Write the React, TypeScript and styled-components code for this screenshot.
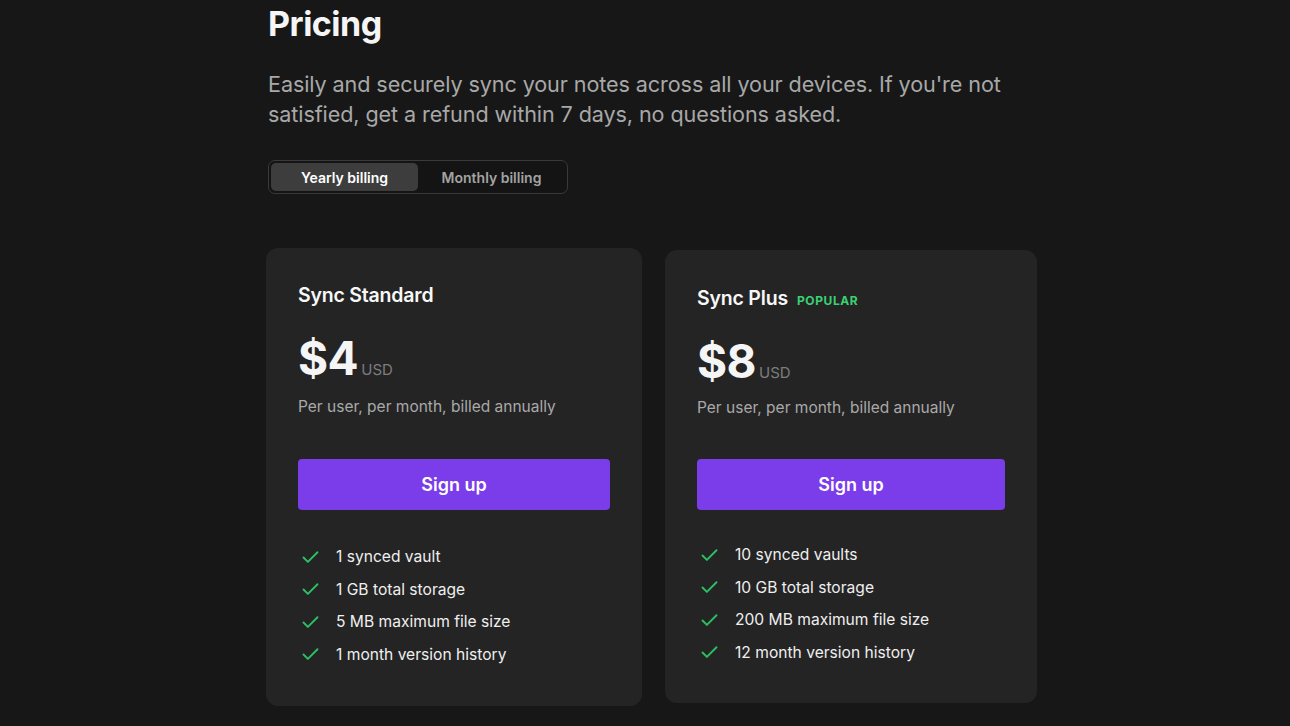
import { useState } from 'react'
import styled, { createGlobalStyle } from 'styled-components'
import { Check } from 'lucide-react'

type Plan = {
  name: string
  badge?: string
  price: string
  features: string[]
}

const plans: Plan[] = [
  {
    name: 'Sync Standard',
    price: '$4',
    features: ['1 synced vault', '1 GB total storage', '5 MB maximum file size', '1 month version history'],
  },
  {
    name: 'Sync Plus',
    badge: 'Popular',
    price: '$8',
    features: ['10 synced vaults', '10 GB total storage', '200 MB maximum file size', '12 month version history'],
  },
]

export default function App() {
  const [billing, setBilling] = useState<'yearly' | 'monthly'>('yearly')

  return (
    <>
      <GlobalStyle />
      <Page>
        <Title>Pricing</Title>
        <Lead>
          Easily and securely sync your notes across all your devices. If you're not satisfied, get a refund
          within 7 days, no questions asked.
        </Lead>
        <Toggle>
          <ToggleButton $active={billing === 'yearly'} onClick={() => setBilling('yearly')}>
            Yearly billing
          </ToggleButton>
          <ToggleButton $active={billing === 'monthly'} onClick={() => setBilling('monthly')}>
            Monthly billing
          </ToggleButton>
        </Toggle>
        <Cards>
          {plans.map((plan) => (
            <Card key={plan.name} $popular={!!plan.badge}>
              <PlanName>
                {plan.name}
                {plan.badge && <Badge>{plan.badge}</Badge>}
              </PlanName>
              <PriceRow>
                <Price>{plan.price}</Price>
                <Currency>USD</Currency>
              </PriceRow>
              <Billed $popular={!!plan.badge}>Per user, per month, billed annually</Billed>
              <SignUp $popular={!!plan.badge}>Sign up</SignUp>
              <Features $popular={!!plan.badge}>
                {plan.features.map((f) => (
                  <Feature key={f}>
                    <Check size={21} strokeWidth={2.2} color="#2cbf64" />
                    {f}
                  </Feature>
                ))}
              </Features>
            </Card>
          ))}
        </Cards>
      </Page>
    </>
  )
}

const GlobalStyle = createGlobalStyle`
  html, body {
    margin: 0;
    background: #171717;
  }
  body {
    font-family: Inter, "Noto Sans", sans-serif;
    color: #f2f2f2;
    -webkit-font-smoothing: antialiased;
  }
`

const Page = styled.main`
  width: 754px;
  margin: 0 auto;
  padding-bottom: 40px;
`

const Title = styled.h1`
  margin: 0;
  padding-top: 2px;
  font-size: 34px;
  line-height: 44px;
  font-weight: 700;
  letter-spacing: -0.5px;
  color: #f5f5f5;
`

const Lead = styled.p`
  margin: 23px 0 0;
  font-size: 21.6px;
  line-height: 30px;
  color: #a8a8a8;
  letter-spacing: -0.1px;
`

const Toggle = styled.div`
  display: inline-flex;
  margin-top: 31px;
  padding: 2px;
  border: 1px solid #3a3a3a;
  border-radius: 7px;
  background: #141414;
  width: 294px;
`

const ToggleButton = styled.button<{ $active: boolean }>`
  flex: 1;
  height: 28px;
  border: none;
  border-radius: 5px;
  font-family: inherit;
  font-size: 14px;
  font-weight: 600;
  cursor: pointer;
  background: ${(p) => (p.$active ? '#3d3d3d' : 'transparent')};
  color: ${(p) => (p.$active ? '#ffffff' : '#a3a3a3')};
`

const Cards = styled.section`
  display: grid;
  grid-template-columns: 376px 372px;
  gap: 23px;
  margin: 54px 0 0 -2px;
  align-items: start;
`

const Card = styled.article<{ $popular: boolean }>`
  background: #242424;
  border-radius: 12px;
  padding: ${(p) => (p.$popular ? '36px 32px 39px' : '35px 32px 40px')};
  margin-top: ${(p) => (p.$popular ? '2px' : '0')};
`

const PlanName = styled.h2`
  display: flex;
  align-items: baseline;
  gap: 9px;
  height: 24px;
  margin: 0;
  font-size: 19.5px;
  line-height: 24px;
  font-weight: 600;
  color: #f7f7f7;
  letter-spacing: -0.2px;
`

const Badge = styled.span`
  font-size: 12px;
  line-height: 12px;
  font-weight: 700;
  letter-spacing: 0.6px;
  text-transform: uppercase;
  color: #3ad173;
`

const PriceRow = styled.div`
  display: flex;
  align-items: baseline;
  gap: 3px;
  margin-top: 23px;
`

const Price = styled.span`
  font-size: 46px;
  line-height: 56px;
  font-weight: 700;
  color: #f5f5f5;
  letter-spacing: -0.5px;
`

const Currency = styled.span`
  font-size: 15px;
  color: #7d7d7d;
`

const Billed = styled.p<{ $popular: boolean }>`
  margin: ${(p) => (p.$popular ? '8px' : '10px')} 0 0;
  font-size: 15.5px;
  line-height: 22px;
  color: #a9a9a9;
`

const SignUp = styled.button<{ $popular: boolean }>`
  display: block;
  width: 100%;
  height: 51px;
  margin-top: ${(p) => (p.$popular ? '40px' : '41px')};
  border: none;
  border-radius: 4px;
  background: #7b3ce9;
  color: #ffffff;
  font-family: inherit;
  font-size: 18px;
  font-weight: 600;
  cursor: pointer;
`

const Features = styled.ul<{ $popular: boolean }>`
  list-style: none;
  margin: ${(p) => (p.$popular ? '34px' : '36px')} 0 0;
  padding: 0;
  display: flex;
  flex-direction: column;
  gap: 10px;
`

const Feature = styled.li`
  display: flex;
  align-items: center;
  gap: 15px;
  padding-left: 2px;
  font-size: 15.6px;
  line-height: 22.5px;
  color: #efefef;
`
